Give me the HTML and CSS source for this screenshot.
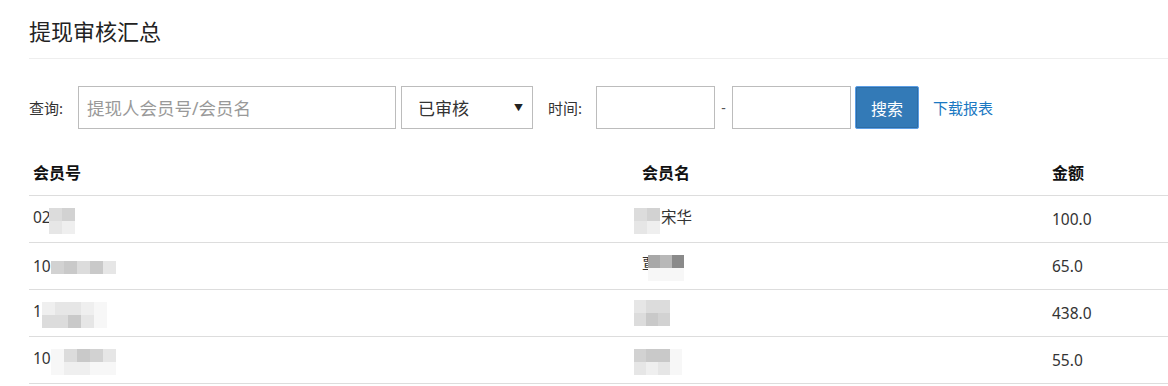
FILE: index.html
```html
<!DOCTYPE html>
<html lang="zh-CN">
<head>
<meta charset="utf-8">
<title>提现审核汇总</title>
<link rel="stylesheet" href="styles.css">
</head>
<body>
<div class="page">
  <h1 class="title">提现审核汇总</h1>
  <form class="filters">
    <label class="lbl">查询:</label>
    <input class="ipt ipt-q" type="text" placeholder="提现人会员号/会员名">
    <div class="select"><span>已审核</span><span class="caret">▼</span></div>
    <label class="lbl lbl-time">时间:</label>
    <input class="ipt ipt-d" type="text">
    <span class="dash">-</span>
    <input class="ipt ipt-d" type="text">
    <button class="btn" type="button">搜索</button>
    <a class="link" href="#">下载报表</a>
  </form>
  <table class="grid">
    <thead>
      <tr><th class="c1">会员号</th><th class="c2">会员名</th><th class="c3">金额</th></tr>
    </thead>
    <tbody>
      <tr>
        <td>02<span class="mz mz-a"><i class="g1"></i><i class="g2"></i><i class="g3"></i><i class="g4"></i></span></td>
        <td><span class="mz mz-n1"><i class="g1"></i><i class="g2"></i><i class="g3"></i><i class="g4"></i></span>宋华</td>
        <td>100.0</td>
      </tr>
      <tr>
        <td>10<span class="mz mz-b"><i class="g2"></i><i class="g5"></i><i class="g1"></i><i class="g5"></i><i class="g3"></i></span></td>
        <td>覃<span class="mz mz-n2"><i class="g6"></i><i class="g7"></i><i class="g8"></i><i class="g0"></i><i class="g0"></i><i class="g0"></i></span></td>
        <td>65.0</td>
      </tr>
      <tr>
        <td>1<span class="mz mz-c"><i class="g4"></i><i class="g3"></i><i class="g3"></i><i class="g4"></i><i class="g0"></i><i class="g1"></i><i class="g1"></i><i class="g5"></i><i class="g3"></i><i class="g0"></i></span></td>
        <td><span class="mz mz-n3"><i class="g3"></i><i class="g1"></i><i class="g1"></i><i class="g1"></i><i class="g5"></i><i class="g2"></i></span></td>
        <td>438.0</td>
      </tr>
      <tr>
        <td>10<span class="mz mz-c"><i class="g0"></i><i class="g1"></i><i class="g5"></i><i class="g2"></i><i class="g3"></i><i class="g0"></i><i class="g4"></i><i class="g4"></i><i class="g0"></i><i class="g0"></i></span></td>
        <td><span class="mz mz-n4"><i class="g2"></i><i class="g5"></i><i class="g5"></i><i class="g0"></i><i class="g3"></i><i class="g4"></i><i class="g3"></i><i class="g0"></i></span></td>
        <td>55.0</td>
      </tr>
    </tbody>
  </table>
</div>
</body>
</html>
```

FILE: styles.css
```css
* { box-sizing: border-box; }
html, body { margin: 0; padding: 0; background: #fff; overflow: hidden; }
body {
  font-family: "Noto Sans", "Noto Sans CJK SC", sans-serif;
  color: #333;
  font-size: 14px;
}
.page { padding-left: 29px; }
.title {
  margin: 0;
  font-size: 22px;
  font-weight: 400;
  line-height: 28px;
  padding: 17px 0 13px 0;
  border-bottom: 1px solid #eee;
  color: #222;
}
.filters {
  display: flex;
  align-items: center;
  margin-top: 27px;
  height: 43px;
}
.lbl { font-size: 15px; color: #333; margin-right: 4px; width: 45px; }
.lbl-time { margin-left: 15px; width: 44px; }
.ipt {
  height: 43px;
  border: 1px solid #bcbcbc;
  font-family: inherit;
  font-size: 17.5px;
  padding: 0 8px;
  color: #333;
  outline: none;
}
.ipt::placeholder { color: #999; }
.ipt-q { width: 318px; }
.ipt-d { width: 119px; }
.select {
  margin-left: 5px;
  width: 132px;
  height: 43px;
  border: 1px solid #bcbcbc;
  display: flex;
  align-items: center;
  justify-content: space-between;
  padding: 0 9px 0 16px;
  font-size: 17px;
  color: #333;
}
.caret { font-size: 9px; color: #222; }
.dash { width: 17px; text-align: center; color: #555; font-size: 14px; }
.btn {
  margin-left: 4px;
  width: 64px;
  height: 43px;
  background: #337ab7;
  border: 1px solid #5b9ee6;
  border-radius: 2px;
  box-shadow: inset 0 0 0 1px #2e6da4;
  color: #fff;
  font-family: inherit;
  font-size: 16px;
  padding: 0;
}
.link {
  margin-left: 14px;
  color: #1a78c2;
  text-decoration: none;
  font-size: 15px;
}
.grid {
  margin-top: 20px;
  width: 1139px;
  border-collapse: collapse;
  table-layout: fixed;
}
.grid th, .grid td {
  text-align: left;
  padding: 0 0 0 4px;
  height: 47px;
  border-bottom: 1px solid #ddd;
  font-size: 16px;
  white-space: nowrap;
  vertical-align: middle;
}
.grid td { font-size: 15.5px; }
.grid th { font-weight: 700; color: #111; height: 46px; }
.grid .c1 { width: 609px; }
.grid .c2 { width: 410px; }
.grid .c3 { width: 120px; }
.mz {
  display: inline-grid;
  grid-auto-rows: 13px;
  vertical-align: middle;
  position: relative;
  top: 2px;
}
.mz i { display: block; width: 13px; height: 13px; }
.mz-a { grid-template-columns: repeat(2, 13px); margin-left: -2px; }
.mz-b { grid-template-columns: repeat(5, 13px); top: 0; }
.mz-c { grid-template-columns: repeat(5, 13px); }
.mz-n1 { grid-template-columns: repeat(2, 13px); margin-left: -8px; margin-right: 1px; }
.mz-n2 { grid-template-columns: repeat(3, 12px); margin-left: -10px; }
.mz-n3 { grid-template-columns: repeat(3, 12px); margin-left: -8px; top: 0; }
.mz-n4 { grid-template-columns: repeat(4, 12px); margin-left: -8px; }
.mz-n2 i, .mz-n3 i, .mz-n4 i { width: 12px; }
.g0 { background: #f7f7f7; }
.g1 { background: #dcdcdc; }
.g2 { background: #d2d2d2; }
.g3 { background: #e6e6e6; }
.g4 { background: #efefef; }
.g5 { background: #c9c9c9; }
.g6 { background: #a8a8a8; }
.g7 { background: #b8b8b8; }
.g8 { background: #8a8a8a; }
```
